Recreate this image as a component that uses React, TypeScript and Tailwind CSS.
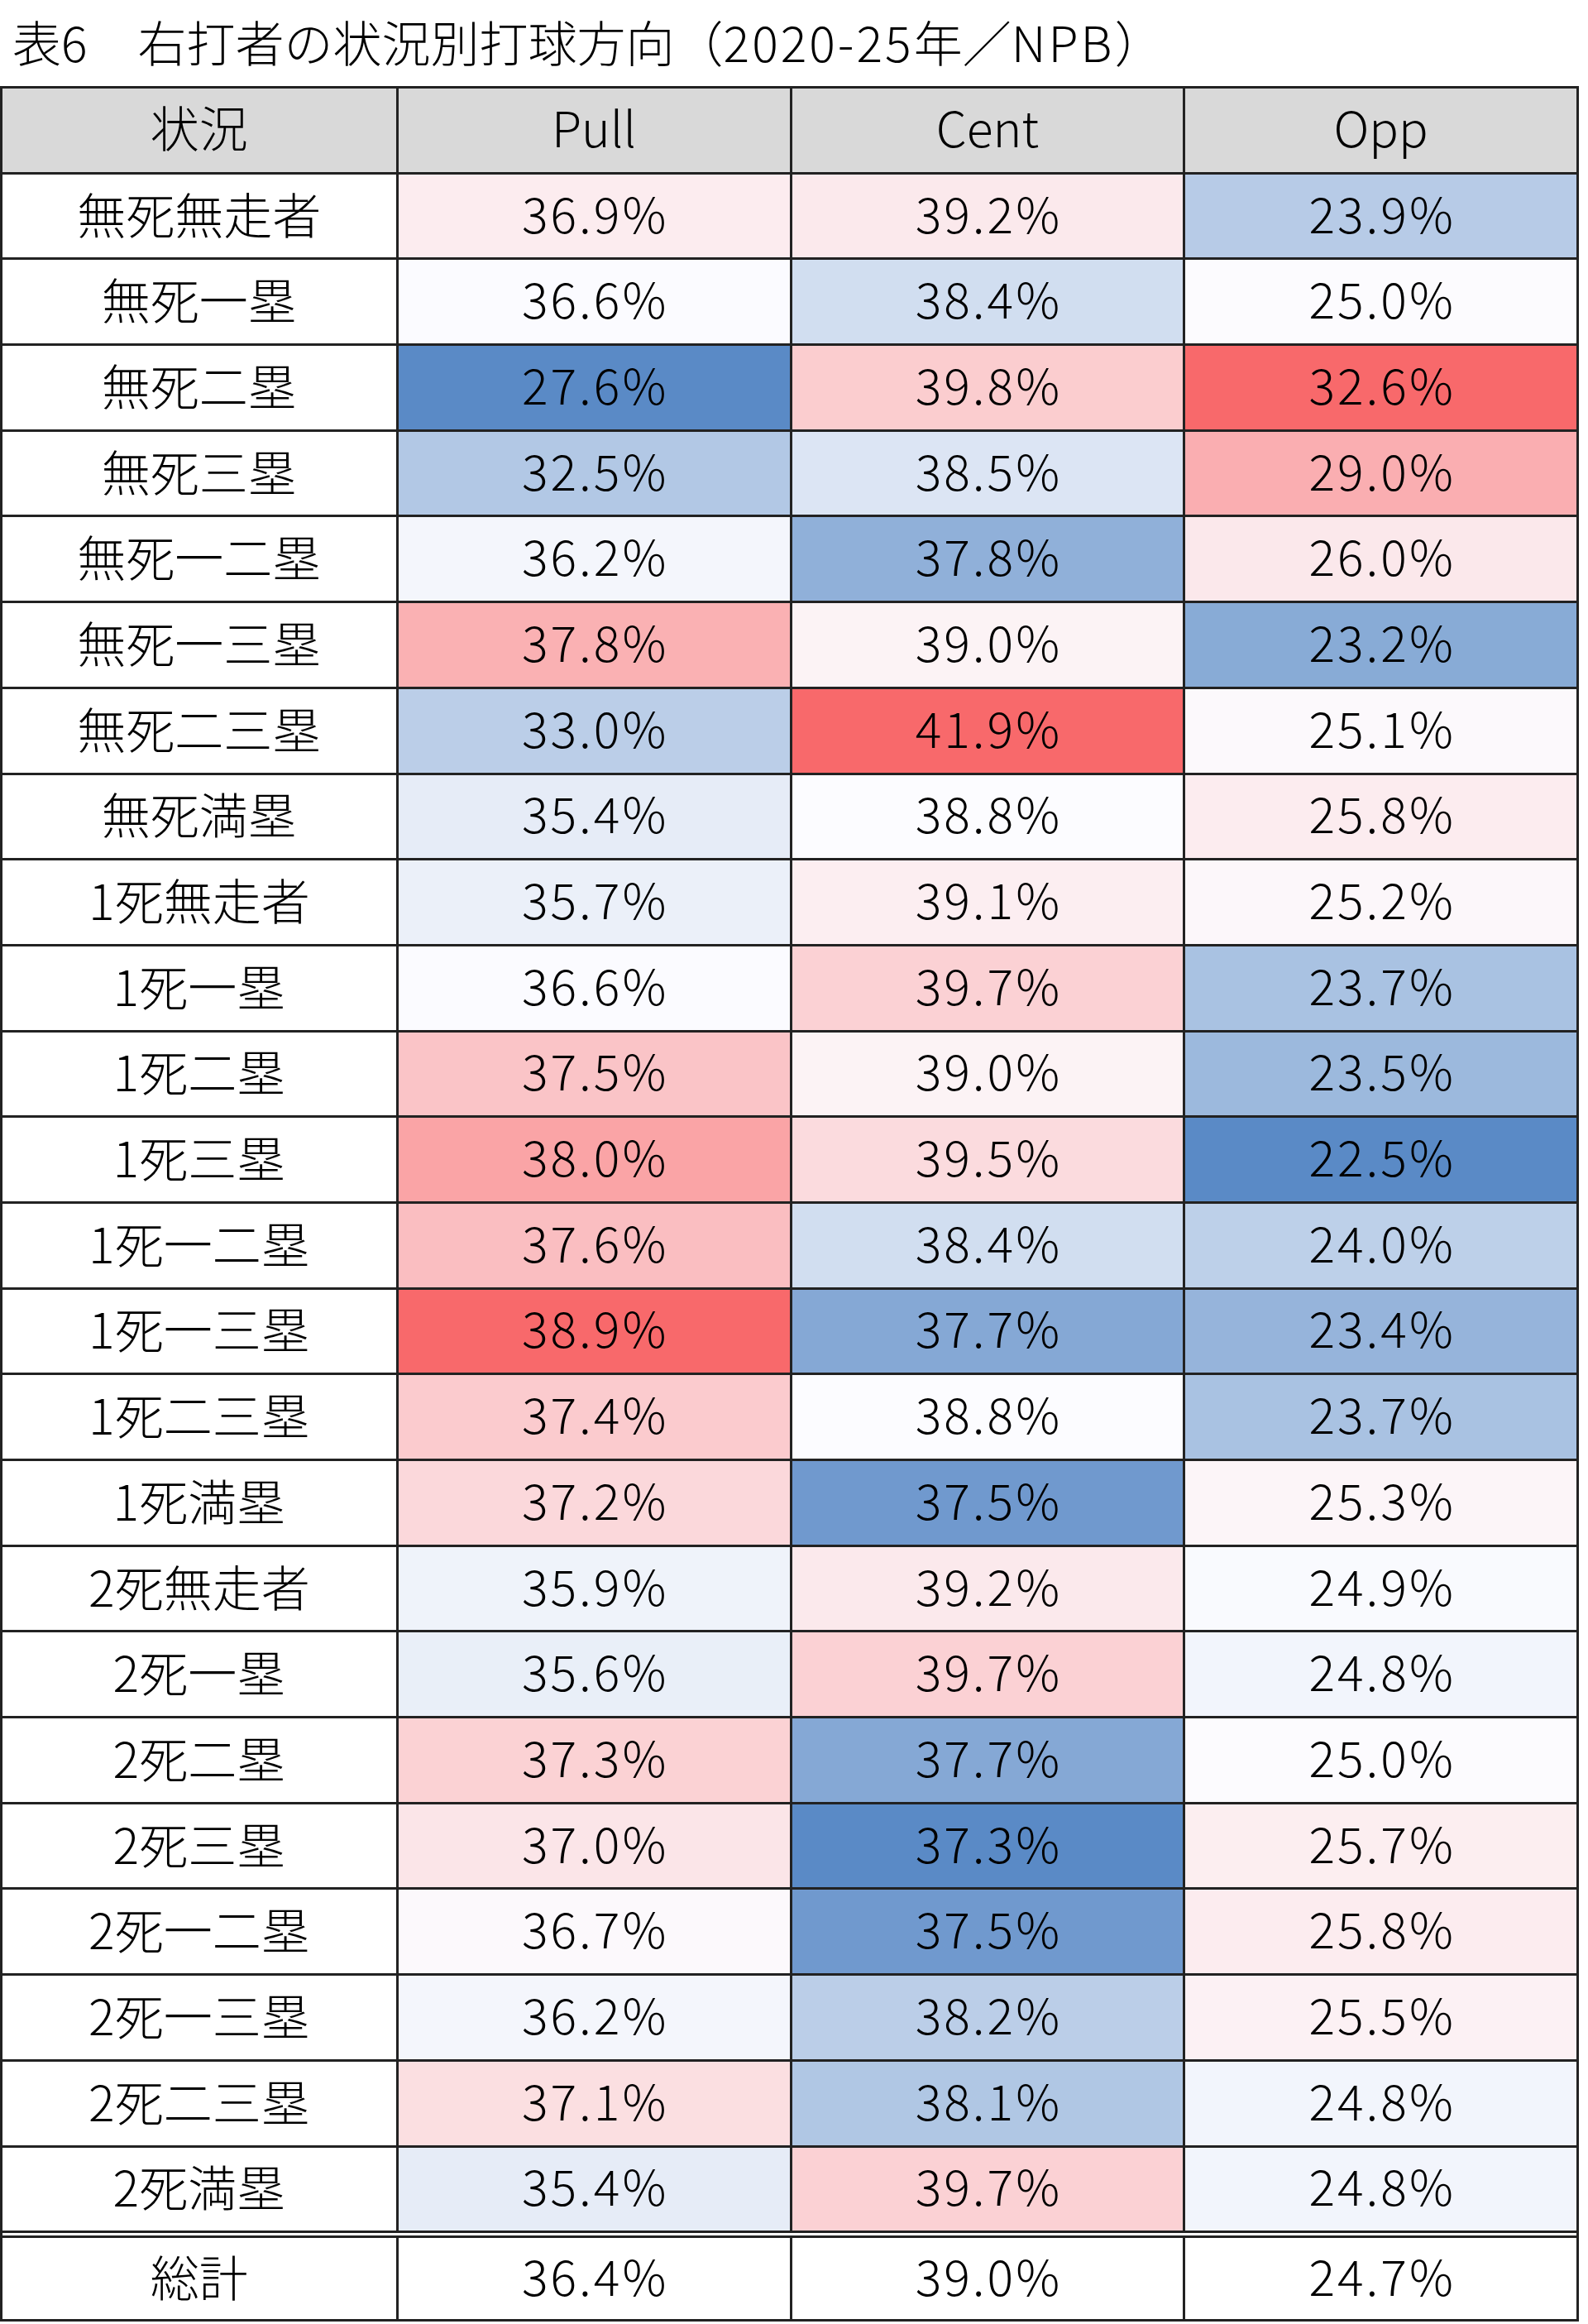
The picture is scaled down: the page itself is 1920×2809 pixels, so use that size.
import React from "react";

type Row = [string, number, number, number];

const rows: Row[] = [
  ["無死無走者", 36.9, 39.2, 23.9],
  ["無死一塁", 36.6, 38.4, 25.0],
  ["無死二塁", 27.6, 39.8, 32.6],
  ["無死三塁", 32.5, 38.5, 29.0],
  ["無死一二塁", 36.2, 37.8, 26.0],
  ["無死一三塁", 37.8, 39.0, 23.2],
  ["無死二三塁", 33.0, 41.9, 25.1],
  ["無死満塁", 35.4, 38.8, 25.8],
  ["1死無走者", 35.7, 39.1, 25.2],
  ["1死一塁", 36.6, 39.7, 23.7],
  ["1死二塁", 37.5, 39.0, 23.5],
  ["1死三塁", 38.0, 39.5, 22.5],
  ["1死一二塁", 37.6, 38.4, 24.0],
  ["1死一三塁", 38.9, 37.7, 23.4],
  ["1死二三塁", 37.4, 38.8, 23.7],
  ["1死満塁", 37.2, 37.5, 25.3],
  ["2死無走者", 35.9, 39.2, 24.9],
  ["2死一塁", 35.6, 39.7, 24.8],
  ["2死二塁", 37.3, 37.7, 25.0],
  ["2死三塁", 37.0, 37.3, 25.7],
  ["2死一二塁", 36.7, 37.5, 25.8],
  ["2死一三塁", 36.2, 38.2, 25.5],
  ["2死二三塁", 37.1, 38.1, 24.8],
  ["2死満塁", 35.4, 39.7, 24.8],
];

const total: Row = ["総計", 36.4, 39.0, 24.7];

const BLUE = [90, 138, 198];
const WHITE = [252, 252, 255];
const RED = [248, 105, 107];

function lerp(a: number[], b: number[], t: number) {
  const c = a.map((x, i) => Math.round(x + (b[i] - x) * t));
  return `rgb(${c[0]}, ${c[1]}, ${c[2]})`;
}

function makeScale(values: number[]) {
  const s = [...values].sort((a, b) => a - b);
  const min = s[0];
  const max = s[s.length - 1];
  const n = s.length;
  const mid = n % 2 === 0 ? (s[n / 2 - 1] + s[n / 2]) / 2 : s[(n - 1) / 2];
  return (v: number) => {
    if (v <= mid) {
      const t = mid === min ? 1 : (v - min) / (mid - min);
      return lerp(BLUE, WHITE, Math.max(0, Math.min(1, t)));
    }
    const t = max === mid ? 0 : (v - mid) / (max - mid);
    return lerp(WHITE, RED, Math.max(0, Math.min(1, t)));
  };
}

const scales = [1, 2, 3].map((k) => makeScale(rows.map((r) => r[k] as number)));

const font = { fontFamily: '"Noto Sans CJK JP", "Noto Sans", sans-serif' };

function Num({ v }: { v: number }) {
  return <span className="tracking-[3px] mr-[-3px]">{v.toFixed(1)}%</span>;
}

export default function App() {
  return (
    <div
      className="w-[1920px] min-h-[2809px] bg-white text-black font-light"
      style={font}
    >
      <div className="h-[104px] flex items-center pl-[15px] pb-[6px] text-[59px] leading-none">
        <span>表</span>
        <span className="tracking-[2px]">6</span>
        <span>　右打者の状況別打球方向（</span>
        <span className="tracking-[3px]">2020-25</span>
        <span>年／</span>
        <span className="tracking-[3px]">NPB</span>
        <span>）</span>
      </div>
      <div className="w-[1909px] border-x-[3px] border-b-[3px] border-[#222]">
        <div className="grid grid-cols-4 h-[103.7px] border-t-[3px] border-[#222] bg-[#d9d9d9] text-[59px] leading-none">
          {["状況", "Pull", "Cent", "Opp"].map((h, i) => (
            <div
              key={h}
              className={`flex items-center justify-center pb-[10px] ${i > 0 ? "border-l-[3px] border-[#222]" : ""}`}
            >
              {h}
            </div>
          ))}
        </div>
        {rows.map((r) => (
          <div
            key={r[0]}
            className="grid grid-cols-4 h-[103.7px] border-t-[3px] border-[#222] text-[59px] leading-none"
          >
            <div className="flex items-center justify-center pb-[8px] bg-white">{r[0]}</div>
            {[1, 2, 3].map((k) => (
              <div
                key={k}
                className="flex items-center justify-center pb-[10px] border-l-[3px] border-[#222]"
                style={{ backgroundColor: scales[k - 1](r[k] as number) }}
              >
                <Num v={r[k] as number} />
              </div>
            ))}
          </div>
        ))}
        <div className="grid grid-cols-4 h-[107px] border-t-[9px] border-double border-[#222] text-[59px] leading-none bg-white">
          <div className="flex items-center justify-center pb-[8px]">{total[0]}</div>
          {[1, 2, 3].map((k) => (
            <div
              key={k}
              className="flex items-center justify-center pb-[10px] border-l-[3px] border-solid border-[#222]"
            >
              <Num v={total[k] as number} />
            </div>
          ))}
        </div>
      </div>
    </div>
  );
}
